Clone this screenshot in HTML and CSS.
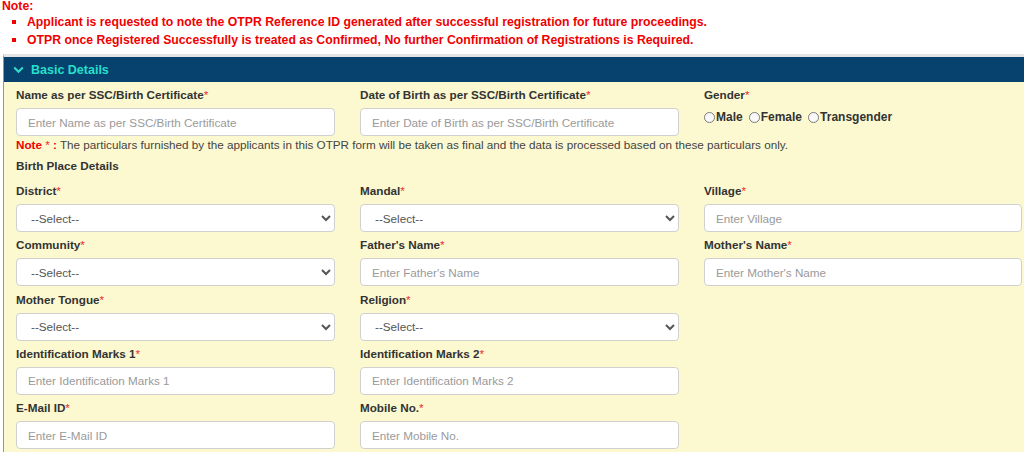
FILE: index.html
```html
<!DOCTYPE html>
<html lang="en">
<head>
<meta charset="utf-8">
<title>OTPR Registration</title>
<link rel="stylesheet" href="styles.css">
</head>
<body>
<div class="notice">
  <div class="notice-title">Note:</div>
  <ul class="notice-list">
    <li>Applicant is requested to note the OTPR Reference ID generated after successful registration for future proceedings.</li>
    <li>OTPR once Registered Successfully is treated as Confirmed, No further Confirmation of Registrations is Required.</li>
  </ul>
</div>
<section class="panel">
  <div class="panel-head">
    <svg class="chev" width="11" height="8" viewBox="0 0 11 8"><path d="M1.2 1.5 L5.5 5.8 L9.8 1.5" fill="none" stroke="#2ee0cc" stroke-width="2"/></svg>
    <span>Basic Details</span>
  </div>
  <div class="panel-body">
    <div class="grid first">
      <div class="field">
        <label class="lbl">Name as per SSC/Birth Certificate<span class="req">*</span></label>
        <input class="ctl" type="text" placeholder="Enter Name as per SSC/Birth Certificate">
      </div>
      <div class="field">
        <label class="lbl">Date of Birth as per SSC/Birth Certificate<span class="req">*</span></label>
        <input class="ctl" type="text" placeholder="Enter Date of Birth as per SSC/Birth Certificate">
      </div>
      <div class="field">
        <label class="lbl">Gender<span class="req">*</span></label>
        <div class="radios">
          <label class="radio"><input type="radio" name="g">Male</label>
          <label class="radio"><input type="radio" name="g">Female</label>
          <label class="radio"><input type="radio" name="g">Transgender</label>
        </div>
      </div>
    </div>
    <p class="particulars"><span class="pnote">Note <span class="star">*</span> :</span> The particulars furnished by the applicants in this OTPR form will be taken as final and the data is processed based on these particulars only.</p>
    <div class="subhead">Birth Place Details</div>
    <div class="grid">
      <div class="field">
        <label class="lbl">District<span class="req">*</span></label>
        <select class="ctl sel"><option>--Select--</option></select>
      </div>
      <div class="field">
        <label class="lbl">Mandal<span class="req">*</span></label>
        <select class="ctl sel"><option>--Select--</option></select>
      </div>
      <div class="field">
        <label class="lbl">Village<span class="req">*</span></label>
        <input class="ctl" type="text" placeholder="Enter Village">
      </div>
      <div class="field">
        <label class="lbl">Community<span class="req">*</span></label>
        <select class="ctl sel"><option>--Select--</option></select>
      </div>
      <div class="field">
        <label class="lbl">Father's Name<span class="req">*</span></label>
        <input class="ctl" type="text" placeholder="Enter Father's Name">
      </div>
      <div class="field">
        <label class="lbl">Mother's Name<span class="req">*</span></label>
        <input class="ctl" type="text" placeholder="Enter Mother's Name">
      </div>
      <div class="field">
        <label class="lbl">Mother Tongue<span class="req">*</span></label>
        <select class="ctl sel"><option>--Select--</option></select>
      </div>
      <div class="field">
        <label class="lbl">Religion<span class="req">*</span></label>
        <select class="ctl sel"><option>--Select--</option></select>
      </div>
      <div class="field"></div>
      <div class="field">
        <label class="lbl">Identification Marks 1<span class="req">*</span></label>
        <input class="ctl" type="text" placeholder="Enter Identification Marks 1">
      </div>
      <div class="field">
        <label class="lbl">Identification Marks 2<span class="req">*</span></label>
        <input class="ctl" type="text" placeholder="Enter Identification Marks 2">
      </div>
      <div class="field"></div>
      <div class="field">
        <label class="lbl">E-Mail ID<span class="req">*</span></label>
        <input class="ctl" type="text" placeholder="Enter E-Mail ID">
      </div>
      <div class="field">
        <label class="lbl">Mobile No.<span class="req">*</span></label>
        <input class="ctl" type="text" placeholder="Enter Mobile No.">
      </div>
      <div class="field"></div>
    </div>
  </div>
</section>
</body>
</html>
```
FILE: styles.css
```css
* { box-sizing: border-box; }
html, body {
  margin: 0;
  padding: 0;
  background: #ffffff;
  font-family: "Liberation Sans", Arial, sans-serif;
  font-size: 12px;
  color: #333333;
  overflow: hidden;
}
.notice {
  padding-left: 2px;
  color: #f00000;
  font-weight: bold;
  font-size: 12.25px;
}
.notice-title {
  line-height: 14px;
  margin-top: -1px;
}
.notice-list {
  list-style: none;
  margin: 0;
  padding: 0 0 0 10px;
}
.notice-list li {
  display: flex;
  align-items: center;
  line-height: 18px;
  white-space: nowrap;
}
.notice-list li::before {
  content: "";
  width: 4px;
  height: 4px;
  background: #f00000;
  margin-right: 11px;
  flex: none;
}
.panel {
  margin: 5px 0 0 3px;
  width: 1021px;
  border-top: 3px solid #e4e4e4;
  border-left: 1px solid #7d9cb8;
  background: #fcf9d1;
}
.panel-head {
  height: 25px;
  background: #06426d;
  display: flex;
  align-items: center;
  padding-left: 9px;
  color: #27dfca;
  font-weight: bold;
  font-size: 12.5px;
  gap: 7px;
}
.chev { display: block; margin-top: 1px; }
.panel-body {
  padding: 4px 0 10px 12px;
}
.grid {
  display: grid;
  grid-template-columns: 319px 319px 318px;
  column-gap: 25px;
}
.field {
  display: flex;
  flex-direction: column;
  margin-bottom: 4.3px;
}
.grid.first .field { margin-bottom: 1px; }
.lbl {
  font-weight: bold;
  font-size: 11.7px;
  line-height: 17px;
  color: #333333;
  margin-bottom: 5px;
  white-space: nowrap;
}
.req { color: #f0262a; font-weight: normal; }
.ctl {
  height: 28px;
  width: 100%;
  border: 1px solid #d0d0d0;
  border-radius: 4px;
  background: #ffffff;
  font-family: "Liberation Sans", Arial, sans-serif;
  font-size: 11.7px;
  color: #555555;
  padding: 0 11px;
  outline: none;
}
.ctl::placeholder { color: #9a9a9a; }
.sel {
  padding: 0 10px;
  color: #555555;
}
.radios {
  display: flex;
  align-items: center;
  gap: 6px;
  height: 22px;
  margin-top: -2px;
}
.radio {
  display: flex;
  align-items: center;
  font-weight: bold;
  font-size: 12px;
  color: #333333;
}
.radio input {
  appearance: none;
  -webkit-appearance: none;
  width: 11px;
  height: 11px;
  margin: 0 1px 0 0;
  border: 1px solid #7a7a7a;
  border-radius: 50%;
  background: #fafafa;
}
.particulars {
  margin: 0;
  font-size: 11.7px;
  line-height: 16px;
  color: #444444;
  white-space: nowrap;
}
.pnote { color: #f00000; font-weight: bold; }
.star { font-weight: normal; color: #f0262a; }
.subhead {
  font-weight: bold;
  font-size: 11.7px;
  line-height: 17px;
  margin-top: 3.5px;
  margin-bottom: 8.5px;
}
```
